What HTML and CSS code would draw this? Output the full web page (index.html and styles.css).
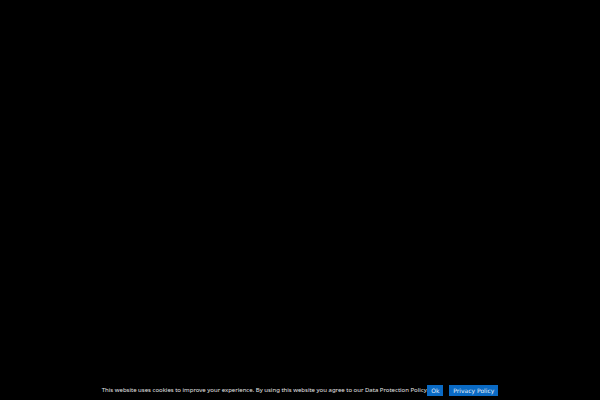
FILE: index.html
```html
<!DOCTYPE html>
<html lang="en">
  <head>
    <meta charset="utf-8">
    <title>Cookie notice</title>
    <link rel="stylesheet" href="styles.css">
  </head>
  <body>
    <main class="page"></main>
    <div class="cookie-notice" role="dialog" aria-label="Cookie notice">
      <span class="cookie-text">This website uses cookies to improve your experience. By using this website you agree to our Data Protection Policy.</span>
      <button type="button" class="cookie-button">Ok</button>
      <a href="#privacy" class="cookie-button">Privacy Policy</a>
    </div>
  </body>
</html>
```

FILE: styles.css
```css
body {
  display: flex;
  flex-direction: column;
  min-height: 100vh;
  margin: 0;
  background-color: #000;
  color: #e6e6e6;
  font-family: "Noto Sans", sans-serif;
}
.page {
  flex: 1;
}
.cookie-notice {
  display: flex;
  justify-content: center;
  align-items: center;
  gap: 6px;
  padding: 4px;
  font-size: 6px;
  line-height: 11px;
}
.cookie-text {
  margin-right: -7px;
  white-space: nowrap;
}
.cookie-button {
  position: relative;
  padding: 0 4px;
  border: 0;
  background-color: #0a6ac4;
  color: #e4f0fa;
  font-family: "DejaVu Sans", sans-serif;
  font-size: 6px;
  line-height: 11px;
  text-decoration: none;
  white-space: nowrap;
}
```
